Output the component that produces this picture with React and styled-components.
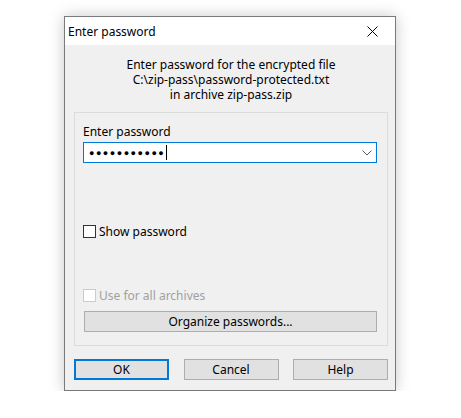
import React from 'react';
import styled, { createGlobalStyle } from 'styled-components';

const GlobalStyle = createGlobalStyle`
  *, *::before, *::after {
    box-sizing: border-box;
  }
  html, body {
    margin: 0;
    padding: 0;
    background: #ffffff;
  }
  body {
    font-family: "Noto Sans", "Open Sans", sans-serif;
    font-size: 12px;
    color: #000;
  }
`;

const Page = styled.div`
  padding: 16px 0 0 64px;
`;

const Window = styled.div`
  width: 332px;
  height: 375px;
  border: 1px solid #7a7a7a;
  background: #f0f0f0;
  box-shadow: 0 0 14px rgba(0, 0, 0, 0.22);
  display: flex;
  flex-direction: column;
`;

const TitleBar = styled.div`
  height: 28px;
  flex-shrink: 0;
  background: #ffffff;
  display: flex;
  align-items: center;
  justify-content: space-between;
  padding-left: 3px;
`;

const Title = styled.span`
  font-size: 12px;
`;

const CloseBox = styled.div`
  width: 46px;
  height: 28px;
  display: flex;
  align-items: center;
  justify-content: center;
`;

const Body = styled.div`
  flex: 1;
  display: flex;
  flex-direction: column;
  padding: 12px 7px 10px 9px;
`;

const Message = styled.div`
  text-align: center;
`;

const MessageLine = styled.div`
  line-height: 15px;
  height: 15px;
`;

const Group = styled.div`
  margin-top: 10px;
  height: 234px;
  border: 1px solid #dcdcdc;
  display: flex;
  flex-direction: column;
  padding: 11px 10px 13px 8px;
`;

const FieldLabel = styled.div`
  line-height: 15px;
`;

const Combo = styled.div`
  margin-top: 3px;
  height: 21px;
  border: 1px solid #0078d7;
  background: #ffffff;
  display: flex;
  align-items: center;
  padding: 0 4px 0 5px;
`;

const Dots = styled.span`
  font-size: 9px;
  letter-spacing: 1.5px;
  line-height: 19px;
`;

const Caret = styled.span`
  width: 1px;
  height: 15px;
  background: #000;
  margin-left: 1px;
`;

const Chevron = styled.svg`
  margin-left: auto;
`;

const CheckRow = styled.label`
  display: flex;
  align-items: center;
  gap: 3px;
  line-height: 15px;
  margin-top: ${(p) => p.$top || 0}px;
  color: ${(p) => (p.$disabled ? '#a0a0a0' : '#000')};
`;

const Box = styled.span`
  width: 13px;
  height: 13px;
  border: 1px solid ${(p) => (p.$disabled ? '#cccccc' : '#333333')};
  background: #ffffff;
`;

const Spacer = styled.div`
  flex: 1;
`;

const Button = styled.div`
  height: 21px;
  border: ${(p) => (p.$default ? '2px solid #0078d7' : '1px solid #adadad')};
  background: #e1e1e1;
  display: flex;
  align-items: center;
  justify-content: center;
`;

const WideButton = styled(Button)`
  margin-top: 8px;
  margin-left: 1px;
`;

const ButtonRow = styled.div`
  margin-top: 13px;
  display: grid;
  grid-template-columns: 95px 95px 95px;
  justify-content: space-between;
`;

export default function App() {
  return (
    <>
      <GlobalStyle />
      <Page>
        <Window>
          <TitleBar>
            <Title>Enter password</Title>
            <CloseBox>
              <svg width="11" height="11" viewBox="0 0 11 11">
                <path d="M0.5 0.5 L10.5 10.5 M10.5 0.5 L0.5 10.5" stroke="#000" strokeWidth="1" />
              </svg>
            </CloseBox>
          </TitleBar>
          <Body>
            <Message>
              <MessageLine>Enter password for the encrypted file</MessageLine>
              <MessageLine>C:\zip-pass\password-protected.txt</MessageLine>
              <MessageLine>in archive zip-pass.zip</MessageLine>
            </Message>
            <Group>
              <FieldLabel>Enter password</FieldLabel>
              <Combo>
                <Dots>●●●●●●●●●●●</Dots>
                <Caret />
                <Chevron width="10" height="6" viewBox="0 0 10 6">
                  <path d="M0.5 0.5 L5 5 L9.5 0.5" stroke="#555" strokeWidth="1" fill="none" />
                </Chevron>
              </Combo>
              <CheckRow $top={61}>
                <Box />
                Show password
              </CheckRow>
              <Spacer />
              <CheckRow $disabled>
                <Box $disabled />
                Use for all archives
              </CheckRow>
              <WideButton>Organize passwords...</WideButton>
            </Group>
            <ButtonRow>
              <Button $default>OK</Button>
              <Button>Cancel</Button>
              <Button>Help</Button>
            </ButtonRow>
          </Body>
        </Window>
      </Page>
    </>
  );
}
